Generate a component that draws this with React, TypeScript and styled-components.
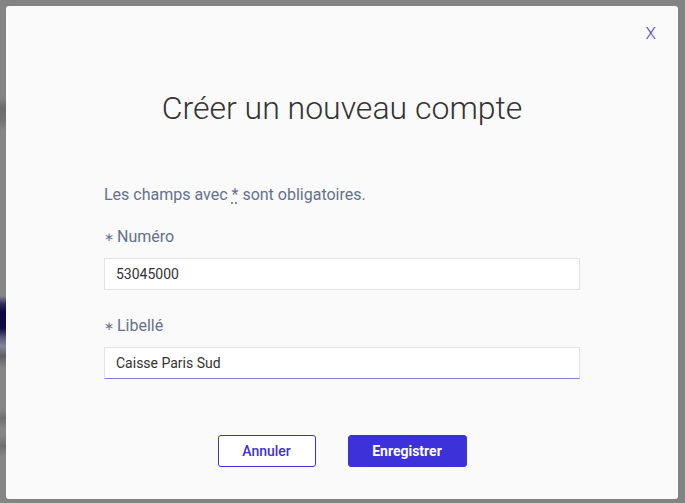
import React from "react";
import styled, { createGlobalStyle } from "styled-components";

const Global = createGlobalStyle`
  html, body {
    margin: 0;
    padding: 0;
  }
  body {
    width: 685px;
    height: 503px;
    overflow: hidden;
    font-family: Roboto, "Liberation Sans", Arial, sans-serif;
    background:
      linear-gradient(
        to bottom,
        #848484 0px,
        #848484 98px,
        #6c6c6c 108px,
        #707070 118px,
        #858585 130px,
        #858585 296px,
        #2c2b5c 304px,
        #0a0742 312px,
        #0c0a45 328px,
        #5e5d78 338px,
        #85859a 346px,
        #5f5f66 356px,
        #858585 368px,
        #858585 410px,
        #6f6f6f 418px,
        #858585 428px,
        #858585 436px,
        #6e6e6e 446px,
        #858585 456px
      ) left top / 6px 100% no-repeat,
      #838383;
  }
`;

const Overlay = styled.div`
  width: 685px;
  height: 503px;
  box-sizing: border-box;
  padding: 6px 7px 4px 6px;
`;

const Modal = styled.div`
  position: relative;
  width: 672px;
  height: 493px;
  box-sizing: border-box;
  background: #fafafa;
  border-radius: 3px;
  padding: 82px 98px 0 98px;
  display: flex;
  flex-direction: column;
`;

const CloseButton = styled.button`
  position: absolute;
  top: 17px;
  right: 22px;
  border: none;
  background: transparent;
  padding: 0;
  font-family: Roboto, "Liberation Sans", Arial, sans-serif;
  font-size: 17px;
  line-height: 20px;
  font-weight: 300;
  color: #4b42e0;
  cursor: pointer;
`;

const Title = styled.h1`
  margin: 0;
  text-align: center;
  font-size: 32px;
  line-height: 40px;
  font-weight: 300;
  color: #333333;
`;

const Hint = styled.p`
  margin: 57px 0 0 0;
  font-size: 16px;
  line-height: 20px;
  color: #64718c;
`;

const Abbr = styled.abbr`
  text-decoration: underline dotted;
  text-underline-offset: 3px;
`;

const Field = styled.div<{ $first?: boolean }>`
  display: flex;
  flex-direction: column;
  margin-top: ${(p) => (p.$first ? "22px" : "26px")};
`;

const Label = styled.label`
  font-size: 16px;
  line-height: 20px;
  color: #64718c;
  margin-bottom: 10px;
`;

const Star = styled.span`
  font-size: 12px;
  margin-right: 3px;
  position: relative;
  top: -1px;
  color: #64718c;
`;

const Input = styled.input<{ $active?: boolean }>`
  box-sizing: border-box;
  width: 476px;
  height: 32px;
  margin: 0;
  padding: 0 11px;
  background: #ffffff;
  border: 1px solid #e3e3e3;
  border-bottom-color: ${(p) => (p.$active ? "#857be8" : "#e3e3e3")};
  border-radius: 0;
  font-family: Roboto, "Liberation Sans", Arial, sans-serif;
  font-size: 14px;
  color: #333333;
  caret-color: #000;
  outline: none;
`;

const Actions = styled.div`
  margin-top: 56px;
  display: flex;
  justify-content: center;
  gap: 32px;
`;

const Button = styled.button<{ $primary?: boolean }>`
  box-sizing: border-box;
  height: 32px;
  padding: 0;
  width: ${(p) => (p.$primary ? "119px" : "98px")};
  border-radius: 3px;
  border: 1px solid #3d31d9;
  background: ${(p) => (p.$primary ? "#3d31d9" : "#ffffff")};
  color: ${(p) => (p.$primary ? "#ffffff" : "#3d31d9")};
  font-family: Roboto, "Liberation Sans", Arial, sans-serif;
  font-size: 14px;
  font-weight: ${(p) => (p.$primary ? 700 : 500)};
  cursor: pointer;
`;

export default function App() {
  return (
    <>
      <Global />
      <Overlay>
        <Modal>
          <CloseButton aria-label="Fermer">X</CloseButton>
          <Title>Créer un nouveau compte</Title>
          <Hint>
            Les champs avec <Abbr title="obligatoire">*</Abbr> sont obligatoires.
          </Hint>
          <Field $first>
            <Label>
              <Star>∗</Star>Numéro
            </Label>
            <Input defaultValue="53045000" />
          </Field>
          <Field>
            <Label>
              <Star>∗</Star>Libellé
            </Label>
            <Input $active defaultValue="Caisse Paris Sud" autoFocus />
          </Field>
          <Actions>
            <Button>Annuler</Button>
            <Button $primary>Enregistrer</Button>
          </Actions>
        </Modal>
      </Overlay>
    </>
  );
}
